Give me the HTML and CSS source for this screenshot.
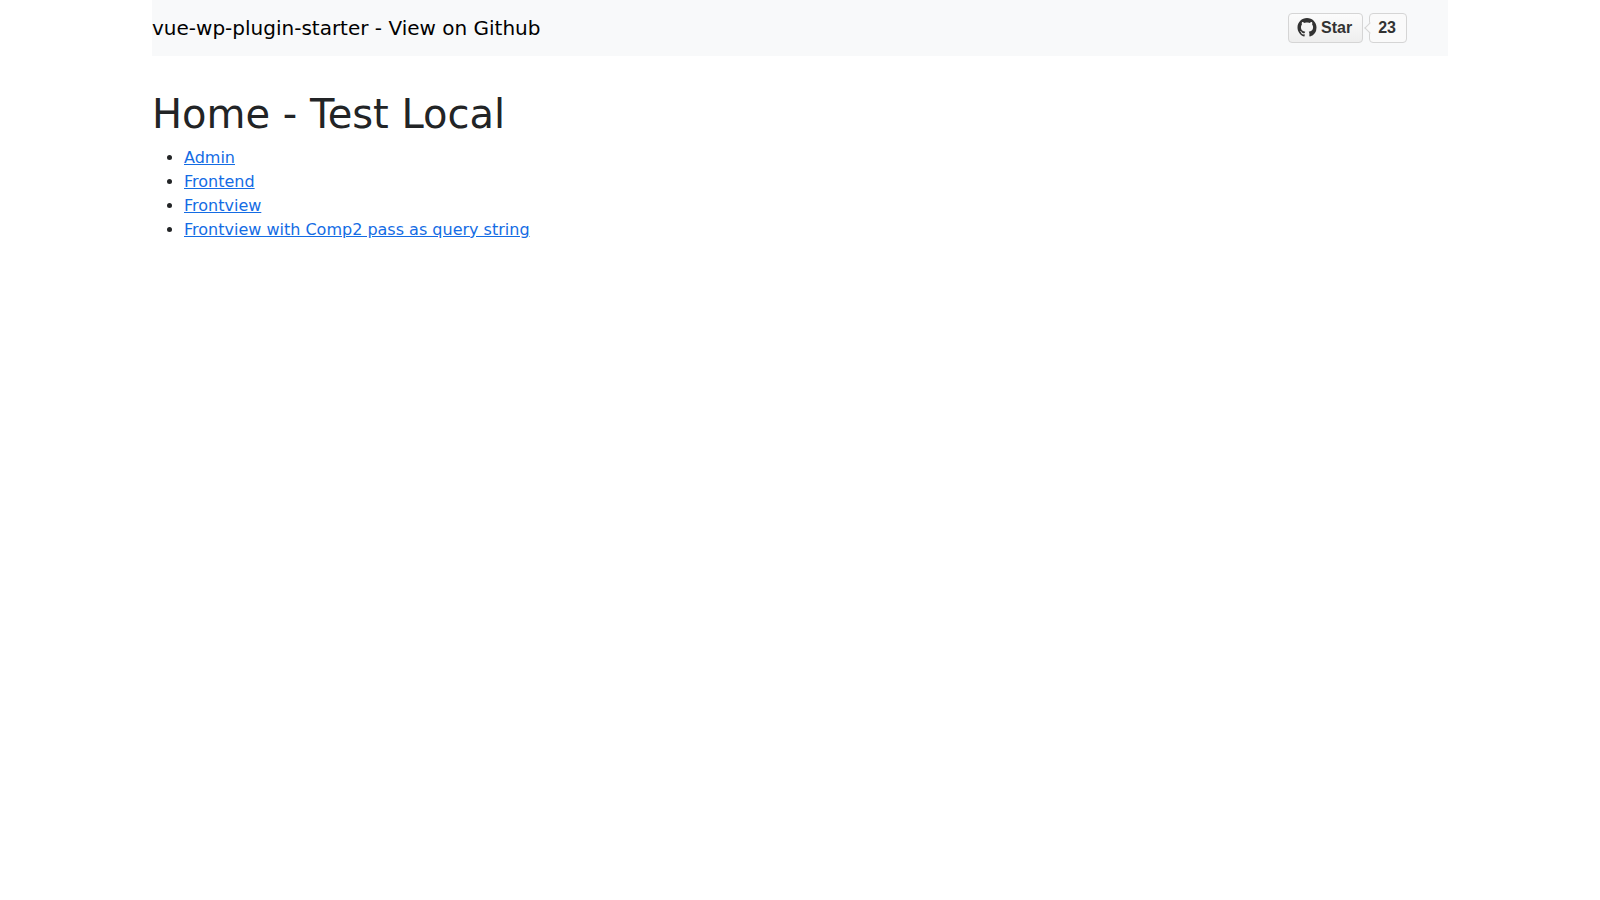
FILE: index.html
```html
<!DOCTYPE html>
<html lang="en">
<head>
    <meta charset="UTF-8">
    <meta name="viewport" content="width=device-width, initial-scale=1.0">
    <title>Home - Test Local</title>
    <link rel="stylesheet" href="styles.css">
</head>
<body>
    <div class="container">
        <nav class="navbar">
            <a class="navbar-brand" href="https://github.com/">vue-wp-plugin-starter - View on Github</a>
            <div class="github-btn">
                <a class="gh-btn" href="https://github.com/">
                    <svg class="gh-ico" viewBox="0 0 16 16" aria-hidden="true">
                        <path fill="#333333" d="M8 0C3.58 0 0 3.58 0 8c0 3.54 2.29 6.53 5.47 7.59.4.07.55-.17.55-.38 0-.19-.01-.82-.01-1.49-2.01.37-2.53-.49-2.69-.94-.09-.23-.48-.94-.82-1.13-.28-.15-.68-.52-.01-.53.63-.01 1.08.58 1.23.82.72 1.21 1.87.87 2.33.66.07-.52.28-.87.51-1.07-1.78-.2-3.64-.89-3.64-3.95 0-.87.31-1.59.82-2.15-.08-.2-.36-1.02.08-2.12 0 0 .67-.21 2.2.82.64-.18 1.32-.27 2-.27s1.36.09 2 .27c1.53-1.04 2.2-.82 2.2-.82.44 1.1.16 1.92.08 2.12.51.56.82 1.27.82 2.15 0 3.07-1.87 3.75-3.65 3.95.29.25.54.73.54 1.48 0 1.07-.01 1.93-.01 2.2 0 .21.15.46.55.38A8.01 8.01 0 0 0 16 8c0-4.42-3.58-8-8-8z"/>
                    </svg>
                    <span>Star</span>
                </a>
                <a class="gh-count" href="https://github.com/">23</a>
            </div>
        </nav>

        <h1>Home - Test Local</h1>
        <ul>
            <li><a href="#admin">Admin</a></li>
            <li><a href="#frontend">Frontend</a></li>
            <li><a href="#frontview">Frontview</a></li>
            <li><a href="#comp2">Frontview with Comp2 pass as query string</a></li>
        </ul>
    </div>
</body>
</html>
```
FILE: styles.css
```css
* {
    box-sizing: border-box;
}

body {
    margin: 0;
    font-family: "DejaVu Sans", sans-serif;
    font-size: 16px;
    line-height: 24px;
    color: #222426;
    background-color: #ffffff;
}

.container {
    max-width: 1320px;
    margin: 0 auto;
    padding: 0 12px;
}

/* Top bar */
.navbar {
    display: flex;
    align-items: center;
    justify-content: space-between;
    padding: 8px 0;
    margin-bottom: 34px;
    background-color: #f8f9fa;
}

.navbar-brand {
    padding: 5px 0;
    font-size: 20px;
    line-height: 30px;
    color: #000000;
    text-decoration: none;
}

/* GitHub star button */
.github-btn {
    display: flex;
    gap: 6px;
    margin-right: 41px;
    font-family: "Liberation Sans", Arial, sans-serif;
    font-size: 16px;
    font-weight: bold;
    line-height: 20px;
}

.gh-btn,
.gh-count {
    display: flex;
    align-items: center;
    height: 30px;
    border: 1px solid #d5d5d5;
    border-radius: 4px;
    color: #333333;
    text-decoration: none;
}

.gh-btn {
    gap: 4px;
    padding: 0 10px 0 8px;
    background-color: #eeeeee;
    background-image: linear-gradient(#fcfcfc, #eeeeee);
}

.gh-ico {
    width: 20px;
    height: 19px;
    margin-bottom: 2px;
}

.gh-count {
    position: relative;
    padding: 0 10px 0 8px;
    background-color: #fafafa;
}

/* Arrow of the counter bubble */
.gh-count::before {
    content: "";
    position: absolute;
    left: -4px;
    top: 10px;
    width: 7px;
    height: 7px;
    border: solid #d5d5d5;
    border-width: 0 0 1px 1px;
    background-color: #fafafa;
    transform: rotate(45deg);
}

h1 {
    margin: 0 0 8px;
    font-size: 40px;
    font-weight: 500;
    line-height: 48px;
}

ul {
    margin: 0 0 16px;
    padding-left: 32px;
}

a {
    color: #146ce4;
}
```
